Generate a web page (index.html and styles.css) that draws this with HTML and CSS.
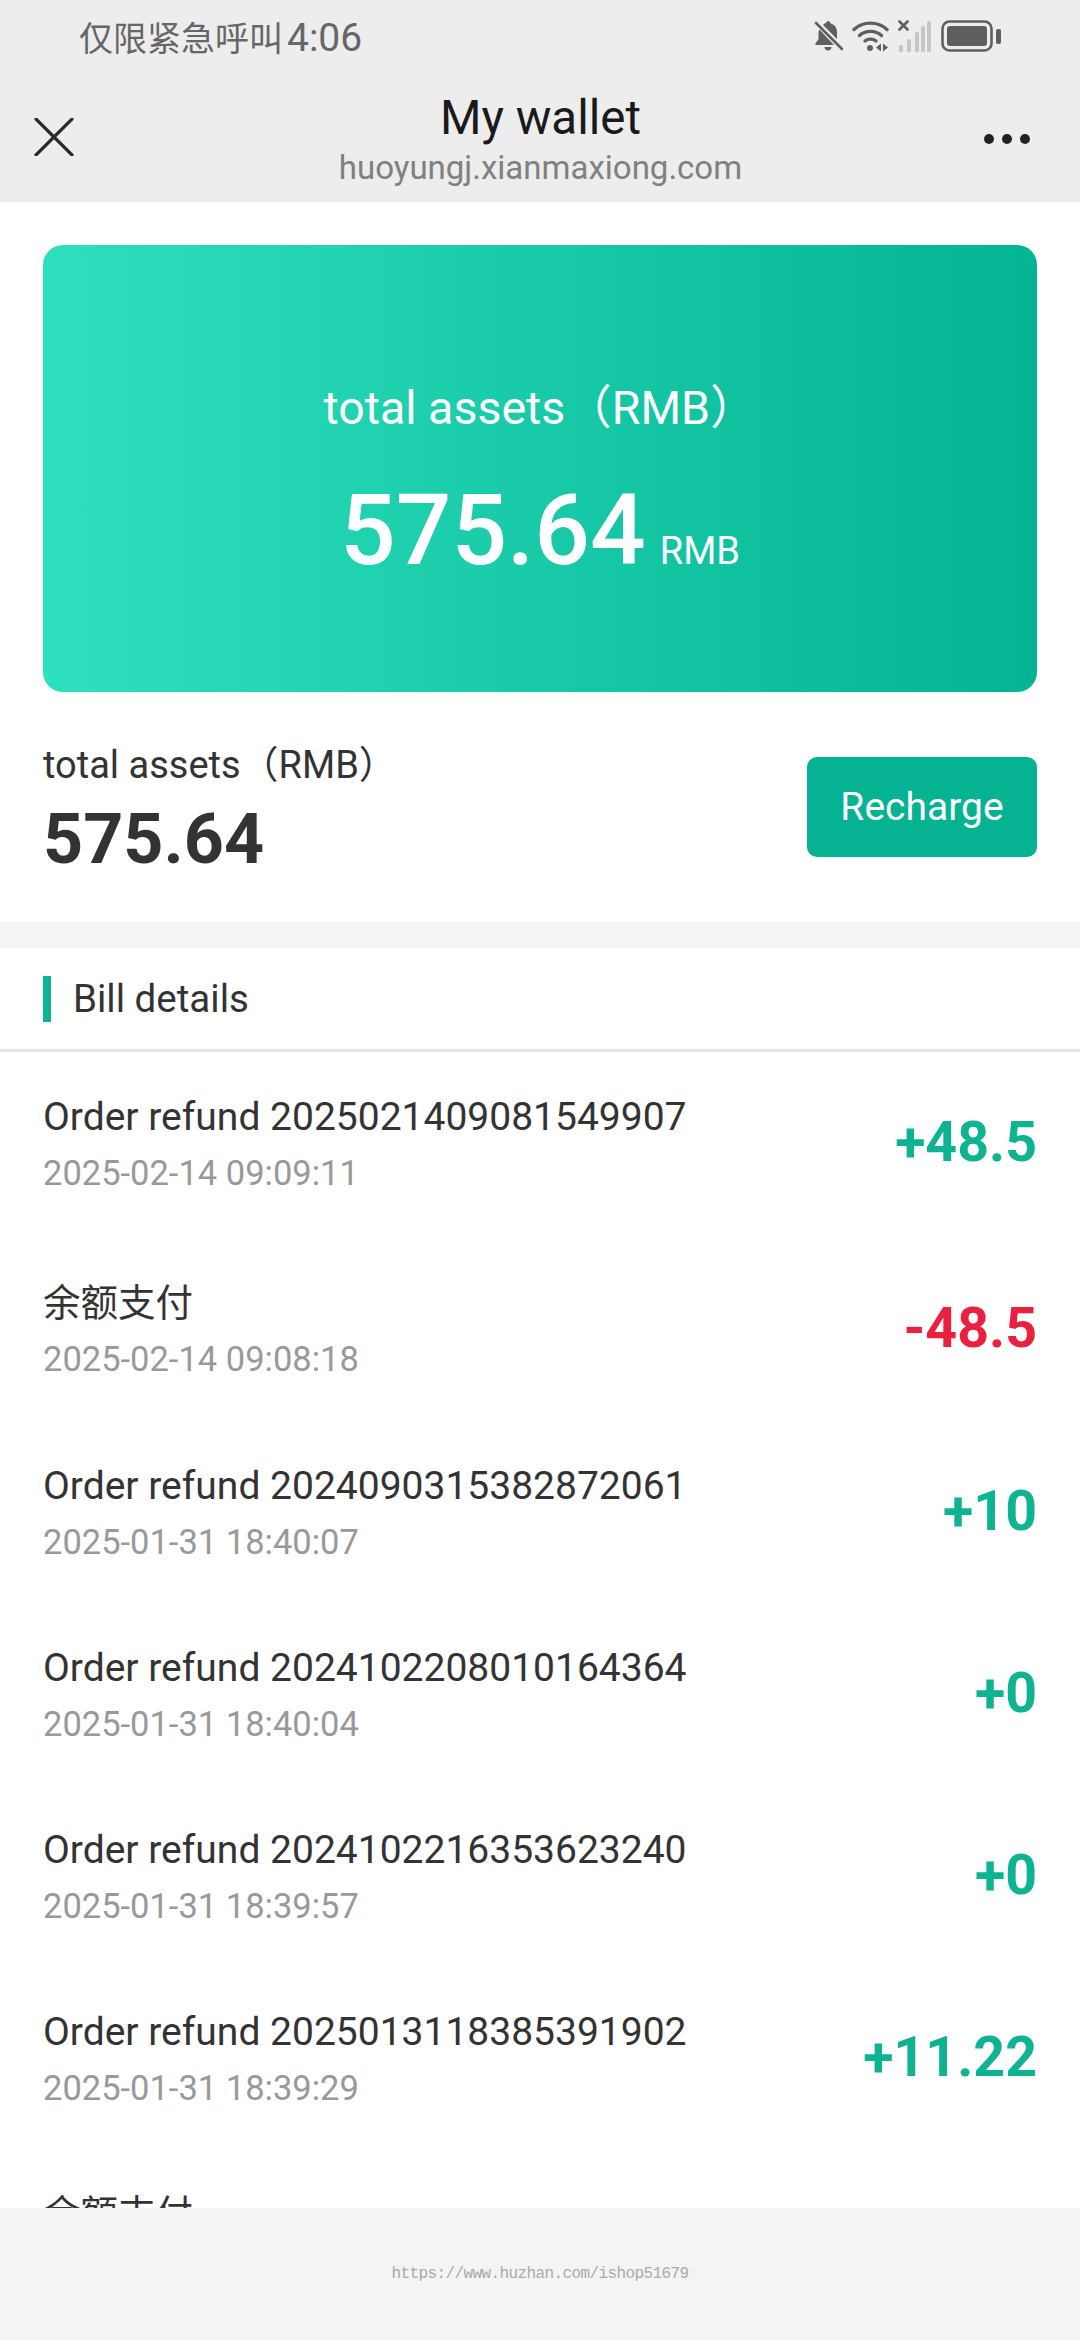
FILE: index.html
```html
<!DOCTYPE html>
<html lang="en">
<head>
    <meta charset="UTF-8">
    <meta name="viewport" content="width=device-width, initial-scale=1.0">
    <title>My wallet</title>
    <link rel="stylesheet" href="styles.css">
</head>
<body>
    <div class="top-bar">
        <div class="status-bar">
            <div class="status-text">仅限紧急呼叫<span class="status-time">4:06</span></div>
            <div class="status-icons">
                <svg class="icon-bell" width="29" height="32" viewBox="0 0 29 32">
                    <path d="M14 1c1.500 0 2.400 1 2.600 2.400 4 1 6.400 4.300 6.400 8.600v7l-14-14c1-1.200 2.200-2 3.500-2.400C12.700 2 13 1 14 1zM5.400 9.500L20 25H1.500v-2l3-3.500V13c0-1.300.3-2.500.9-3.500zM10.500 27h7c0 2-1.500 3.500-3.500 3.500s-3.500-1.500-3.500-3.500z" fill="#5f5f5f"/>
                    <path d="M2 3l26 26" stroke="#5f5f5f" stroke-width="2.600" stroke-linecap="round"/>
                </svg>
                <svg class="icon-wifi" width="37" height="32" viewBox="0 0 37 32">
                    <g fill="none" stroke="#5f5f5f" stroke-linecap="round" stroke-width="3.400">
                        <path d="M2 9.500C11 1 26 1 35 9.500"/>
                        <path d="M7.500 15.500c6-5.500 16-5.500 22 0"/>
                        <path d="M13 21c3-2.500 8-2.500 11 0"/>
                    </g>
                    <circle cx="18" cy="28" r="3" fill="#5f5f5f"/>
                    <path d="M24 27.500l5-4v8zM31 23.500l5 4-5 4z" fill="#5f5f5f"/>
                </svg>
                <svg class="icon-signal" width="34" height="32" viewBox="0 0 34 32">
                    <path d="M1.500 1.500l8 8M9.500 1.500l-8 8" stroke="#5f5f5f" stroke-width="2.600" stroke-linecap="round"/>
                    <g fill="#c6c6c6">
                        <rect x="1" y="25" width="4" height="7" rx="1.500"/>
                        <rect x="9" y="19" width="4" height="13" rx="1.500"/>
                        <rect x="17" y="12" width="4" height="20" rx="1.500"/>
                        <rect x="23" y="6" width="4" height="26" rx="1.500"/>
                        <rect x="29" y="1" width="4" height="31" rx="1.500"/>
                    </g>
                </svg>
                <svg class="icon-battery" width="60" height="32" viewBox="0 0 60 32">
                    <rect x="1.500" y="1.500" width="49" height="29" rx="7" fill="none" stroke="#5f5f5f" stroke-width="2.600"/>
                    <rect x="6" y="6" width="40" height="20" rx="3" fill="#5f5f5f"/>
                    <rect x="55" y="9" width="5" height="15" rx="2" fill="#5f5f5f"/>
                </svg>
            </div>
        </div>
        <div class="nav-bar">
            <svg class="nav-close" width="40" height="38" viewBox="0 0 40 38">
                <path d="M2 1l36 36M38 1L2 37" stroke="#2a2a2a" stroke-width="3.200" stroke-linecap="round"/>
            </svg>
            <div class="nav-title">
                <div class="nav-name">My wallet</div>
                <div class="nav-url">huoyungj.xianmaxiong.com</div>
            </div>
            <div class="nav-more"><span></span><span></span><span></span></div>
        </div>
    </div>

    <div class="main">
        <div class="asset-card">
            <div class="asset-card-label">total assets（RMB）</div>
            <div class="asset-card-amount">575.64<span class="asset-card-unit">RMB</span></div>
        </div>

        <div class="summary">
            <div class="summary-left">
                <div class="summary-label">total assets（RMB）</div>
                <div class="summary-amount">575.64</div>
            </div>
            <button class="recharge-btn">Recharge</button>
        </div>

        <div class="bill-head">
            <span class="bill-mark"></span>
            <span class="bill-title">Bill details</span>
        </div>

        <div class="bill-list">
            <div class="bill-row">
                <div>
                    <div class="bill-name">Order refund 2025021409081549907</div>
                    <div class="bill-date">2025-02-14 09:09:11</div>
                </div>
                <div class="bill-amount plus">+48.5</div>
            </div>
            <div class="bill-row">
                <div>
                    <div class="bill-name bill-name-cn">余额支付</div>
                    <div class="bill-date">2025-02-14 09:08:18</div>
                </div>
                <div class="bill-amount minus">-48.5</div>
            </div>
            <div class="bill-row">
                <div>
                    <div class="bill-name">Order refund 2024090315382872061</div>
                    <div class="bill-date">2025-01-31 18:40:07</div>
                </div>
                <div class="bill-amount plus">+10</div>
            </div>
            <div class="bill-row">
                <div>
                    <div class="bill-name">Order refund 2024102208010164364</div>
                    <div class="bill-date">2025-01-31 18:40:04</div>
                </div>
                <div class="bill-amount plus">+0</div>
            </div>
            <div class="bill-row">
                <div>
                    <div class="bill-name">Order refund 2024102216353623240</div>
                    <div class="bill-date">2025-01-31 18:39:57</div>
                </div>
                <div class="bill-amount plus">+0</div>
            </div>
            <div class="bill-row">
                <div>
                    <div class="bill-name">Order refund 2025013118385391902</div>
                    <div class="bill-date">2025-01-31 18:39:29</div>
                </div>
                <div class="bill-amount plus">+11.22</div>
            </div>
            <div class="bill-row">
                <div>
                    <div class="bill-name bill-name-cn">余额支付</div>
                </div>
            </div>
        </div>
    </div>

    <div class="footer">https://www.huzhan.com/ishop51679</div>
</body>
</html>
```

FILE: styles.css
```css
body {
    margin: 0;
    height: 2340px;
    overflow: hidden;
    display: flex;
    flex-direction: column;
    background: #fff;
    font-family: Roboto, "Noto Sans CJK SC", sans-serif;
    color: #333;
}

.top-bar {
    height: 202px;
    flex-shrink: 0;
    background: #ededed;
}

.status-bar {
    height: 72px;
    display: flex;
    align-items: center;
    justify-content: space-between;
    padding: 0 79px;
    box-sizing: border-box;
}

.status-text {
    font-size: 34px;
    color: #666;
    font-family: "Noto Sans CJK SC", sans-serif;
}

.status-time {
    font-family: Roboto, sans-serif;
    font-size: 39px;
    margin-left: 4px;
}

.status-icons {
    display: flex;
    align-items: center;
    gap: 9px;
}

.nav-bar {
    height: 130px;
    display: flex;
    align-items: flex-start;
    justify-content: space-between;
    padding: 0 50px 0 34px;
}

.nav-close {
    margin-top: 46px;
}

.nav-title {
    text-align: center;
    padding-left: 23px;
    padding-top: 14px;
}

.nav-name {
    font-size: 47.500px;
    line-height: 65px;
    color: #1a1a1a;
}

.nav-url {
    font-size: 33px;
    line-height: 38px;
    margin-top: -2px;
    color: #808080;
}

.nav-more {
    display: flex;
    gap: 8px;
    margin-top: 62px;
}

.nav-more span {
    width: 10px;
    height: 10px;
    border-radius: 50%;
    background: #222;
}

.main {
    flex: 1;
    overflow: hidden;
}

.asset-card {
    height: 447px;
    box-sizing: border-box;
    margin: 43px 43px 0;
    padding-top: 133px;
    border-radius: 20px;
    background: linear-gradient(90deg, #2ee0bd, #03b493);
    color: #fff;
    text-align: center;
    display: flex;
    flex-direction: column;
    align-items: center;
}

.asset-card-label {
    font-size: 46.500px;
    line-height: 60px;
}

.asset-card-amount {
    font-size: 98px;
    line-height: 120px;
    margin-top: 33px;
    font-weight: 500;
}

.asset-card-unit {
    font-size: 38px;
    font-weight: 400;
    margin-left: 14px;
}

.summary {
    height: 230px;
    display: flex;
    align-items: center;
    justify-content: space-between;
    padding: 0 43px;
    border-bottom: 26px solid #f4f4f4;
}

.summary-left {
    padding-top: 7px;
}

.summary-label {
    font-size: 38px;
    line-height: 50px;
}

.summary-amount {
    font-size: 70px;
    font-weight: 700;
    line-height: 84px;
    margin-top: 7px;
}

.recharge-btn {
    width: 230px;
    height: 100px;
    border: none;
    border-radius: 10px;
    background: #05b392;
    color: #fff;
    font-family: inherit;
    font-size: 39px;
}

.bill-head {
    height: 101px;
    display: flex;
    align-items: center;
    gap: 22px;
    padding: 0 43px;
    border-bottom: 3px solid #e4e4e4;
}

.bill-mark {
    width: 8px;
    height: 46px;
    background: #0eb392;
}

.bill-title {
    font-size: 38.500px;
}

.bill-list {
    padding: 35px 43px 0;
}

.bill-row {
    height: 182px;
    display: flex;
    align-items: flex-start;
    justify-content: space-between;
}

.bill-row:first-child {
    height: 186px;
}

.bill-row:nth-child(2) {
    height: 183px;
}

.bill-name {
    font-size: 39px;
    line-height: 61px;
}

.bill-name-cn {
    font-size: 37.500px;
}

.bill-date {
    font-size: 34.500px;
    line-height: 50px;
    color: #999;
}

.bill-amount {
    font-size: 55.500px;
    font-weight: 700;
    line-height: 112px;
}

.plus {
    color: #0eb392;
}

.minus {
    color: #e9213f;
}

.footer {
    height: 132px;
    flex-shrink: 0;
    background: #f4f4f4;
    display: flex;
    align-items: center;
    justify-content: center;
    font-family: "Liberation Mono", monospace;
    font-size: 16px;
    letter-spacing: -0.6px;
    color: #aaa;
}
```
